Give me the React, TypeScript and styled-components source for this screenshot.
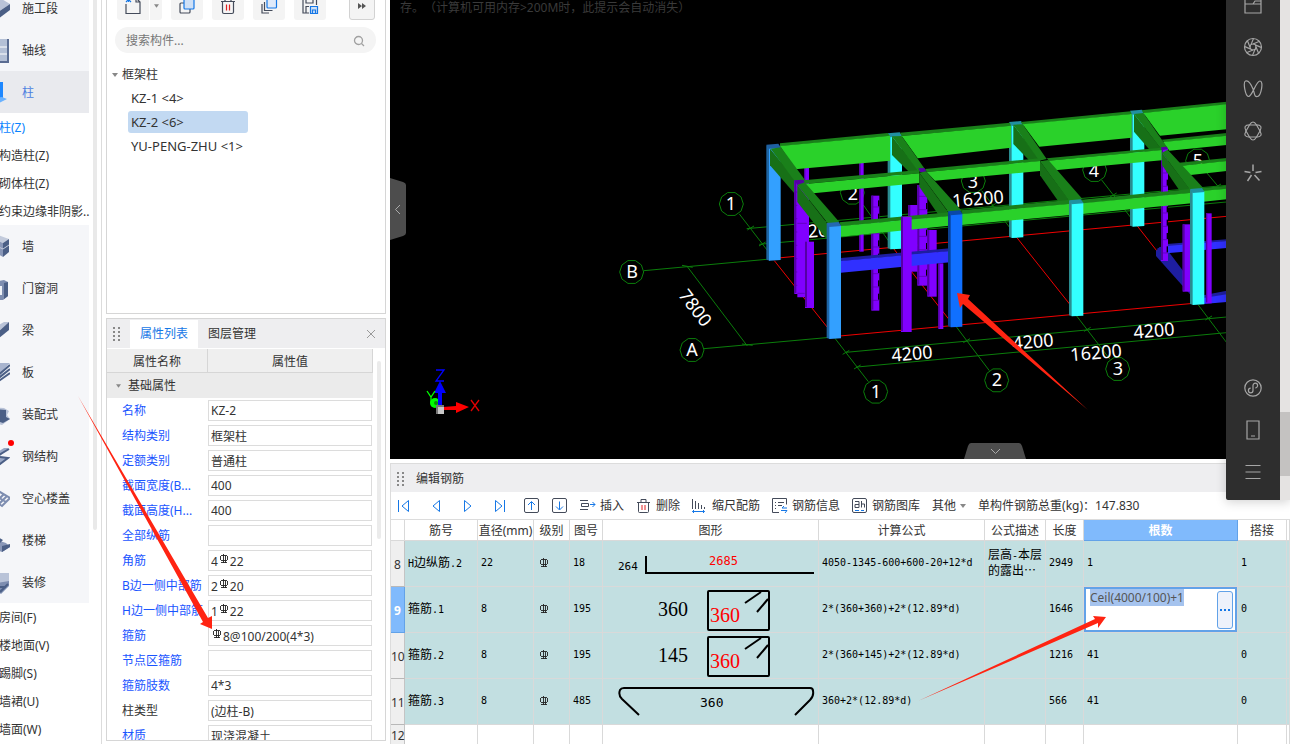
import React from 'react';
import styled, { createGlobalStyle } from 'styled-components';

const GlobalStyle = createGlobalStyle`
  * { box-sizing: border-box; }
  body {
    margin: 0;
    background: #fff;
    color: #333;
    font: 12px/16px "Noto Sans", "Noto Sans CJK SC", sans-serif;
    text-spacing-trim: space-all;
    overflow: hidden;
  }
  button, input { font: inherit; color: inherit; }
  button { background: none; border: 0; padding: 0; cursor: pointer; }
  ul { list-style: none; margin: 0; padding: 0; }
  svg { display: block; flex: none; }
`;

const Page = styled.div`
  position: relative;
  display: flex;
  height: 100vh;
  overflow: hidden;
`;

/* ---------- navigation ---------- */

const NavColumn = styled.nav`
  flex: none;
  display: flex;
  align-items: flex-start;
  width: 102px;
  margin-right: 4px;
  border-right: 1px solid #dcdcdc;
  overflow: hidden;
`;

const NavList = styled.ul`
  width: 109px;
  margin: -13px 4px 0 -20px;
`;

const NavItem = styled.button<{ $active?: boolean }>`
  position: relative;
  display: flex;
  align-items: center;
  gap: 12px;
  width: 100%;
  height: 42px;
  padding: 2px 0 0 6px;
  text-align: left;
  white-space: nowrap;
  background: ${(p) => (p.$active ? '#e9eaee' : '#f5f6f9')};
  color: ${(p) => (p.$active ? '#4c7fe0' : '#333')};
`;

const NavSub = styled.button<{ $active?: boolean }>`
  display: block;
  width: 100%;
  height: 28px;
  padding: 2px 0 0 19px;
  text-align: left;
  white-space: nowrap;
  color: ${(p) => (p.$active ? '#0a84ff' : '#333')};
`;

const Dot = styled.i`
  position: absolute;
  left: 28px;
  top: 5px;
  width: 6px;
  height: 6px;
  border-radius: 50%;
  background: #f00;
`;

const NavScroll = styled.div`
  width: 4px;
  height: 530px;
  border-radius: 0 0 2px 2px;
  background: #e9e9e9;
`;

const NavIcon = ({ kind }: { kind: string }) => {
  const d: Record<string, React.ReactNode> = {
    stage: (<><path d="M6 8l12-7 10 6-12 8z" fill="#b9c3d8" /><path d="M16 15l12-8v6l-12 9z" fill="#4b5f86" /><path d="M6 8l10 7v7L6 15z" fill="#7d8db0" /></>),
    axis: (<><path d="M4 0h22v24H4z" fill="#b4c0d6" /><path d="M25 0h2v24h-2zM4 22h22v2H4z" fill="#5a6c92" /><path d="M4 8h21M4 15h21" stroke="#fff" /></>),
    column: (<><path d="M14 1h7v17h-7z" fill="#1e88ff" /><path d="M8 17l12-1 5 2-10 5z" fill="#6ab2ff" /></>),
    wall: (<><path d="M10 3l6-3 11 4-6 4z" fill="#c3cbdc" /><path d="M10 3l11 5v14l-11-6z" fill="#8997b8" /><path d="M21 8l6-4v13l-6 5z" fill="#4b5f86" /><path d="M10 9l11 5 6-4" stroke="#c3cbdc" fill="none" /></>),
    door: (<><path d="M10 5l12-2 4 2v14l-5 4H10z" fill="#7d8db0" /><path d="M14 9h6v9h-6z" fill="#eef1f6" /><path d="M22 6l4-1v14l-4 3z" fill="#4b5f86" /></>),
    beam: (<><path d="M8 11L22 3h5L16 13z" fill="#b9c3d8" /><path d="M16 13L27 3v8L12 23z" fill="#4b5f86" /></>),
    slab: (<><path d="M8 13l8-11h12L17 13z" fill="#a9b5cf" /><path d="M14 16L28 4M14 19L28 8M14 22L28 12" stroke="#4b5f86" strokeWidth="2" /></>),
    prefab: (<><path d="M8 4l14 1 5 3-2 4 3 4-8 6-12-3z" fill="#b9c3d8" /><path d="M12 6l12 1v7l4 2-7 4-9-3z" fill="#4b5f86" /></>),
    steel: (<><path d="M8 12L22 3h5L17 12l9 1-12 10" fill="#9aa8c6" /><path d="M10 14L27 4M14 22l12-9-8-1" stroke="#4b5f86" strokeWidth="2" fill="none" /></>),
    hollow: (<path d="M10 12l8-7 10 6-8 8zM14 9l10 6M22 7l-8 8M25 9l-8 8" stroke="#7d8db0" strokeWidth="2" fill="none" />),
    stair: (<><path d="M8 6l8 2 2 4 6 2 4 4-8 5-12-5z" fill="#8997b8" /><path d="M16 8l5 3-3 3zM20 17l8-2v3l-8 5z" fill="#4b5f86" /></>),
    decor: (<><path d="M10 2h17v9l-7 4H10z" fill="#b9c3d8" /><path d="M10 13l17-3v5l-8 8-9-6z" fill="#7d8db0" /><path d="M12 16h12M18 21l8-8" stroke="#4b5f86" strokeWidth="2" /></>),
  };
  return <svg width="24" height="24" viewBox="4 0 24 24" aria-hidden="true">{d[kind]}</svg>;
};

/* ---------- component list panel ---------- */

const Sidebar = styled.aside`
  flex: none;
  display: flex;
  flex-direction: column;
  width: 280px;
  margin: 0 4px 3px 0;
  gap: 4px;
`;

const ListPanel = styled.section`
  flex: none;
  height: 314px;
  border: 1px solid #d6d6d6;
  border-top: 0;
  overflow: hidden;
`;

const IconBar = styled.div`
  display: flex;
  gap: 9px;
  height: 28px;
  margin: -8px 10px 7px;
`;

const IconButton = styled.button<{ $wide?: boolean; $framed?: boolean }>`
  display: flex;
  align-items: center;
  justify-content: center;
  width: ${(p) => (p.$wide ? 45 : p.$framed ? 26 : 32)}px;
  border-radius: 3px;
  background: #f4f4f4;
  ${(p) => p.$wide && 'gap: 0; justify-content: flex-start;'}
  ${(p) => p.$framed && 'margin-left: auto; border: 1px solid #d2d2d2;'}
`;

const SplitPart = styled.span<{ $main?: boolean }>`
  display: flex;
  align-items: center;
  justify-content: center;
  height: 100%;
  flex: ${(p) => (p.$main ? '0 0 33px' : '1')};
  border-right: ${(p) => (p.$main ? '1px solid #fff' : '0')};
`;

const SearchBox = styled.label`
  display: flex;
  align-items: center;
  height: 26px;
  margin: 0 9px 9px 8px;
  padding: 1px 11px 0;
  border-radius: 13px;
  background: #f4f4f4;
`;

const SearchInput = styled.input`
  flex: 1;
  min-width: 0;
  padding: 0;
  border: 0;
  outline: 0;
  background: none;
  &::placeholder { color: #777; opacity: 1; }
`;

const TreeHead = styled.button`
  display: flex;
  align-items: center;
  gap: 4px;
  height: 24px;
  padding: 2px 0 0 5px;
`;

const TreeItem = styled.button<{ $selected?: boolean }>`
  display: block;
  width: 120px;
  height: 22px;
  margin: 1px 0 2px 21px;
  padding-left: 3px;
  border-radius: 3px;
  font-size: 13px;
  line-height: 22px;
  text-align: left;
  white-space: pre;
  background: ${(p) => (p.$selected ? '#c2d9f2' : 'transparent')};
`;

const Caret = ({ size = 5 }: { size?: number }) => (
  <svg width={size} height="4" viewBox="0 0 6 4" aria-hidden="true"><path d="M0 0h6L3 4z" fill="#888" /></svg>
);

/* ---------- properties ---------- */

const PropPanel = styled.section`
  flex: 1;
  min-height: 0;
  border: 1px solid #d6d6d6;
  overflow: hidden;
`;

const TabBar = styled.div`
  display: flex;
  align-items: center;
  height: 30px;
  padding: 0 9px 0 6px;
  background: #eeeef0;
  border-bottom: 1px solid #fff;
`;

const Tab = styled.button<{ $active?: boolean }>`
  height: 28px;
  padding: 0 10px;
  background: ${(p) => (p.$active ? '#fff' : 'transparent')};
  color: ${(p) => (p.$active ? '#1577e6' : '#333')};
  &:first-of-type { margin-left: 9px; }
`;

const TabClose = styled.button`margin-left: auto;`;

const PropBody = styled.div`
  display: flex;
  align-items: flex-start;
`;

const PropTable = styled.table`
  flex: 1;
  border-collapse: separate;
  border-spacing: 0;
  table-layout: fixed;
`;

const PropHead = styled.th`
  height: 24px;
  padding: 2px 0 0;
  border-right: 1px solid #d6d6d6;
  border-bottom: 1px solid #d6d6d6;
  background: #efefef;
  font-weight: normal;
  &:first-child { width: 101px; }
`;

const GroupCell = styled.td`
  height: 25px;
  padding: 1px 0 0 9px;
  background: #ebebeb;
`;

const GroupButton = styled.button`
  display: flex;
  align-items: center;
  gap: 7px;
`;

const PropName = styled.td<{ $plain?: boolean }>`
  height: 25px;
  padding: 0 0 0 15px;
  color: ${(p) => (p.$plain ? '#333' : '#1a55ff')};
  white-space: nowrap;
  overflow: hidden;
`;

const PropValue = styled.td`
  position: relative;
  height: 25px;
  padding: 0 1px 0 0;
`;

const Field = styled.input`
  display: block;
  width: 100%;
  height: 21px;
  padding: 0 2px;
  border: 1px solid #dcdcdc;
  background: #fff;
`;

const FieldSign = styled.span<{ $after: number }>`
  position: absolute;
  left: ${(p) => 4 + p.$after * 7}px;
  top: 6px;
`;

const PropScroll = styled.div`
  width: 4px;
  height: 178px;
  margin: 12px 4px 0 4px;
  border-radius: 2px;
  background: #ebebeb;
`;

const Grip = () => (
  <svg width="8" height="14" viewBox="0 0 8 14" fill="#888" aria-hidden="true">
    {[0, 4, 8, 12].map((y) => (<React.Fragment key={y}><path d={`M0 ${y}h2v2H0z`} /><path d={`M5 ${y}h2v2H5z`} /></React.Fragment>))}
  </svg>
);

const RebarSign = () => (
  <svg width="10" height="10" viewBox="0 0 10 10" fill="none" stroke="#222" role="img" aria-label="HRB400">
    <path d="M1.500 2v4M8.500 2v4M2 1.500h6M2 6.500h6" strokeWidth=".9" />
    <path d="M4.500 0v9M6.500 2v7M2 8.500h6" strokeWidth=".9" />
  </svg>
);

type Prop = { name: string; value: string; sign?: number; plain?: boolean };
const props: Prop[] = [
  { name: '名称', value: 'KZ-2' },
  { name: '结构类别', value: '框架柱' },
  { name: '定额类别', value: '普通柱' },
  { name: '截面宽度(B...', value: '400' },
  { name: '截面高度(H...', value: '400' },
  { name: '全部纵筋', value: '' },
  { name: '角筋', value: '4\u300022', sign: 1 },
  { name: 'B边一侧中部筋', value: '2\u300020', sign: 1 },
  { name: 'H边一侧中部筋', value: '1\u300022', sign: 1 },
  { name: '箍筋', value: '\u30008@100/200(4*3)', sign: 0 },
  { name: '节点区箍筋', value: '' },
  { name: '箍筋肢数', value: '4*3' },
  { name: '柱类型', value: '(边柱-B)', plain: true },
  { name: '材质', value: '现浇混凝土' },
];

/* ---------- main area ---------- */

const Main = styled.main`
  flex: 1;
  min-width: 0;
  display: flex;
  flex-direction: column;
`;

const Viewport = styled.section`
  position: relative;
  flex: 1;
  min-height: 0;
  margin-bottom: 4px;
  background: #000;
  overflow: hidden;
`;

const MemoryNote = styled.p`
  position: absolute;
  left: 10px;
  top: 0;
  margin: 0;
  color: #3a3a3a;
  white-space: nowrap;
`;

const SideHandle = styled.button`
  position: absolute;
  left: 0;
  top: 178px;
`;

const BottomHandle = styled.button`
  position: absolute;
  left: 574px;
  bottom: 0;
`;

const C = { g: '#2ad12a', gt: '#1a801a', gs: '#177017', cy: '#33ffff', cyd: '#2a8c90', bl: '#33a0ff', bld: '#1f66a5', p: '#8000ff', pd: '#5500a5', b: '#3030ff', bd: '#1e1ea0' };

const beams: [string, string][] = [
  [C.gt, '540,160 863,129 870,138 540,169'], [C.g, '540,168 870,137 870,212 585,238'],
  [C.gt, '900,128 1230,98 1233,108 905,138'], [C.g, '905,138 1233,107 1233,173 953,205'],
  [C.gt, '1262,96 1592,64 1595,73 1268,104'], [C.g, '1268,103 1595,72 1595,143 1318,170'],
  [C.gt, '1625,61 1880,35 1880,44 1630,70'], [C.g, '1630,69 1880,43 1880,118 1680,137'],
];
const crossBack: [string, string][] = [
  [C.gs, '510,176 592,276 583,310 510,226'], [C.gt, '512,176 543,172 615,270 588,278'],
  [C.gs, '876,139 958,245 925,244 876,195'], [C.gt, '876,139 905,138 975,238 956,246'],
  [C.gs, '1240,104 1322,212 1290,214 1240,162'], [C.gt, '1240,104 1268,103 1340,207 1318,212'],
  [C.gs, '1602,72 1685,178 1650,181 1602,125'], [C.gt, '1602,72 1630,69 1700,170 1684,178'],
];
const midBeams: [string, string][] = [
  [C.gt, '610,271 958,240 958,250 612,282'], [C.g, '615,282 958,250 958,279 640,310'],
  [C.gt, '975,237 1320,205 1320,214 980,246'], [C.g, '980,246 1320,213 1320,243 1005,272'],
  [C.gt, '1340,205 1683,173 1685,181 1347,212'], [C.g, '1345,212 1685,180 1685,211 1365,241'],
  [C.gt, '1685,149 1880,129 1880,138 1692,157'], [C.g, '1690,156 1880,137 1880,165 1708,182'],
  [C.gt, '1730,219 1880,204 1880,214 1740,228'], [C.g, '1738,228 1880,213 1880,243 1765,256'],
];
const crossFront: [string, string][] = [
  [C.gs, '592,285 688,408 680,448 592,336'], [C.gt, '592,285 614,277 718,396 688,406'],
  [C.gs, '958,248 1048,371 1015,374 958,290'], [C.gt, '958,248 978,244 1085,362 1048,370'],
  [C.gs, '1320,214 1410,334 1378,338 1320,256'], [C.gt, '1320,214 1345,210 1448,328 1410,336'],
  [C.gs, '1686,188 1772,301 1740,304 1686,225'], [C.gt, '1686,188 1703,179 1810,294 1772,302'],
];
const frontBeams: [string, string][] = [
  [C.gt, '718,397 1048,367 1048,379 723,409'], [C.g, '723,408 1048,378 1048,407 723,440'],
  [C.gt, '1083,361 1412,329 1412,342 1085,373'], [C.g, '1085,372 1412,341 1412,375 1085,405'],
  [C.gt, '1445,329 1772,297 1775,309 1448,341'], [C.g, '1448,340 1775,308 1775,340 1448,372'],
  [C.gt, '1805,294 1880,287 1880,297 1810,303'], [C.g, '1810,302 1880,296 1880,328 1810,335'],
];

const Faces = ({ list }: { list: [string, string][] }) => (<>{list.map(([f, pts]) => <polygon key={pts} fill={f} points={pts} />)}</>);

const Column = ({ x, y, main = C.cy, side = C.cyd, cap = '#2090a0' }: { x: number; y: number; main?: string; side?: string; cap?: string }) => (
  <g>
    <path d={`M${x} ${y + 4}h10v346l-10 -3z`} fill={side} />
    <path d={`M${x + 8} ${y + 10}h35v338l-35 2z`} fill={main} />
    <path d={`M${x} ${y + 2}l36 -3l8 12l-36 3z`} fill={cap} />
  </g>
);

const Post = ({ x, y, w, h, block }: { x: number; y: number; w: number; h: number; block?: boolean }) => (
  <g>
    <rect x={x} y={y} width={w} height={h} fill={C.p} />
    <rect x={x} y={y} width={w > 20 ? 6 : 4} height={h - 3} fill={C.pd} />
    {block && Array.from({ length: Math.floor(h / 40) }, (_, i) => (
      <g key={i}>
        <path d={`M${x} ${y + 40 * i + 34}h${w}`} stroke={C.pd} strokeWidth="2" />
        <rect x={x + w - 4} y={y + 40 * i + 14} width="4" height="18" fill="#000" />
      </g>
    ))}
  </g>
);

const bubbles = [[95, 546], [276, 780], [394, 342], [757, 308], [1120, 273], [1484, 240], [1793, 212], [827, 905], [1190, 871], [1553, 837]];
const ring = (cx: number, cy: number) =>
  Array.from({ length: 10 }, (_, i) => `${cx + 36 * Math.cos((i * Math.PI) / 5)},${cy + 36 * Math.sin((i * Math.PI) / 5)}`).join(' ');
const ticks = [[452, 414], [487, 462], [738, 787], [772, 831], [1100, 752], [1462, 718], [1826, 684], [1180, 345], [1540, 315], [1853, 288]];

const Label = ({ x, y, r = 0, children }: { x: number; y: number; r?: number; children: string }) => (
  <text x={x} y={y} dy="6" textAnchor="middle" transform={r ? `rotate(${r} ${x} ${y})` : undefined}>{children}</text>
);

const Scene = () => (
  <svg width="100%" height="100%" viewBox="390 0 900 459" preserveAspectRatio="xMinYMid slice" role="img" aria-label="框架柱三维视图">
    <g transform="translate(600 90) scale(.33333)">
      <g stroke="#0b7d0b" strokeWidth="3" fill="none">
        {bubbles.map(([x, y]) => <polygon key={`${x}-${y}`} points={ring(x, y)} />)}
        <path d="M132 542L500 508M312 776L690 742M262 530L442 768M246 526L278 532M426 762L458 766M418 372L505 485M440 416L1880 286M478 463L1880 336M790 345L885 480M1145 302L1250 440M1505 270L1612 408M1815 242L1855 290M738 787L1880 681M772 831L1880 728M705 745L805 875M1065 705L1168 842M1430 678L1530 808M1795 645L1880 758" />
        {ticks.map(([x, y]) => <path key={x} d={`M${x - 10} ${y + 6}L${x + 10} ${y - 6}`} />)}
      </g>
      <path d="M523 505L1880 379M720 738L1770 641M523 512L690 722M880 475L1060 705M1250 442L1415 650M1612 408L1790 635" stroke="#f00000" strokeWidth="3" fill="none" />
    </g>
    <g fill="#fff" fontFamily="'Noto Sans', sans-serif" fontSize="18">
      <Label x={632} y={272}>B</Label>
      <Label x={692} y={350}>A</Label>
      <Label x={731} y={204}>1</Label>
      <Label x={853} y={194}>2</Label>
      <Label x={973} y={182}>3</Label>
      <Label x={1094} y={171}>4</Label>
      <Label x={1198} y={161}>5</Label>
      <Label x={876} y={392}>1</Label>
      <Label x={997} y={380}>2</Label>
      <Label x={1118} y={369}>3</Label>
      <Label x={695} y={308} r={53}>7800</Label>
      <Label x={818} y={231} r={-5}>20</Label>
      <Label x={978} y={199} r={-5}>16200</Label>
      <Label x={912} y={354} r={-5}>4200</Label>
      <Label x={1033} y={342} r={-5}>4200</Label>
      <Label x={1096} y={353} r={-5}>16200</Label>
      <Label x={1154} y={331} r={-5}>4200</Label>
    </g>
    <g transform="translate(600 90) scale(.33333)">
      <Post x={778} y={215} w={13} h={270} />
      <Post x={612} y={230} w={15} h={240} />
      <Column x={499} y={162} main={C.bl} side={C.bld} cap="#1f5fa0" />
      <Column x={863} y={128} />
      <Column x={1227} y={94} />
      <Column x={1590} y={60} />
      <Faces list={beams} />
      <Faces list={crossBack} />
      <Faces list={[[C.bd, '1668,482 1680,470 1708,488 1770,570 1775,618 1668,498'], [C.bd, '1668,478 1700,462 1880,448 1880,454 1700,472'], [C.b, '1700,468 1880,453 1880,474 1700,490'], [C.bd, '1810,616 1880,602 1880,614 1810,626'], [C.b, '1810,624 1880,613 1880,636 1810,642']]} />
      <Post x={583} y={272} w={35} h={340} block />
      <path d="M592 300h30v322h-30z" fill={C.p} />
      <path d="M592 400h28M592 610h22" stroke={C.pd} strokeWidth="2" />
      <Post x={615} y={455} w={27} h={199} />
      <Post x={814} y={317} w={24} h={345} block />
      <Post x={952} y={285} w={30} h={302} block />
      <Post x={1683} y={175} w={21} h={338} block />
      <Faces list={midBeams} />
      <Faces list={[[C.pd, '583,271 610,269 616,281 592,285'], [C.pd, '955,235 973,234 980,245 961,247'], [C.pd, '1683,172 1700,170 1704,178 1687,180']]} />
      <Faces list={crossFront} />
      <Post x={925} y={345} w={27} h={200} />
      <Post x={982} y={420} w={28} h={200} />
      <Post x={1748} y={403} w={24} h={202} />
      <Faces list={[[C.bd, '723,504 1050,475 1050,484 723,514'], [C.b, '723,513 1050,483 1050,517 723,548']]} />
      <Post x={1015} y={520} w={15} h={197} />
      <Faces list={frontBeams} />
      <Post x={903} y={380} w={32} h={346} />
      <Post x={1818} y={370} w={17} h={270} />
      <Column x={680} y={397} main={C.bl} side={C.bld} cap="#2468b0" />
      <Column x={1044} y={362} main="#1070ff" side="#0a3f90" cap="#0a48a8" />
      <Column x={1407} y={329} />
      <Column x={1770} y={295} />
    </g>
    <g>
      <circle cx="435" cy="403" r="5" fill="#0f0" />
      <circle cx="436" cy="403" r="2" fill="#0a900a" />
      <path d="M438 406v-13h-4l6-12 6 12h-4v13z" fill="#00f" />
      <path d="M443 407l13-1v-4l13 5-13 6v-3h-13z" fill="#f00" />
      <path d="M436 405h8v9h-8z" fill="#c8c8c8" />
      <path d="M436 405h8v2h-6v7h-2z" fill="#777" />
      <path d="M436 370h8l-8 11h8" stroke="#00f" strokeWidth="1.3" fill="none" />
      <path d="M471 400l8 11M479 400l-8 11" stroke="#e00000" strokeWidth="1.3" fill="none" />
      <path d="M427 391l4 6 4-6M431 397v6" stroke="#0f0" strokeWidth="1.3" fill="none" />
    </g>
  </svg>
);

/* ---------- rebar editor ---------- */

const Editor = styled.section`
  flex: none;
  height: 281px;
  border-top: 1px solid #dcdcdc;
  border-left: 1px solid #dcdcdc;
  overflow: hidden;
`;

const EditorTitle = styled.h2`
  display: flex;
  align-items: center;
  gap: 11px;
  height: 28px;
  margin: 0;
  padding: 2px 0 0 6px;
  background: #eeeef0;
  font-size: 12px;
  font-weight: normal;
`;

const EditorBar = styled.div`
  display: flex;
  align-items: center;
  gap: 12px;
  height: 28px;
  padding: 1px 0 0 5px;
  border-bottom: 1px solid #dcdcdc;
  white-space: nowrap;
`;

const Pager = styled.div`
  display: flex;
  gap: 16px;
  margin-right: 4px;
`;

const Tool = styled.button`
  display: flex;
  align-items: center;
  gap: 4px;
`;

const Grid = styled.table`
  width: 100%;
  border-collapse: separate;
  border-spacing: 0;
  table-layout: fixed;
`;

const HeadCell = styled.th<{ $active?: boolean }>`
  height: 21px;
  padding: 2px 0 0;
  border-right: 1px solid #d9d9d9;
  border-bottom: 1px solid #d9d9d9;
  white-space: nowrap;
  overflow: hidden;
  font-weight: ${(p) => (p.$active ? 'bold' : 'normal')};
  ${(p) => p.$active && 'background: #80bafc; color: #fff; border-color: #62a2e8;'}
`;

const RowHead = styled.th<{ $active?: boolean; $top?: boolean }>`
  height: 46px;
  padding: 3px 0 0;
  border-right: 1px solid #c4c4c4;
  border-bottom: 1px solid #b8b8b8;
  background: #efefef;
  font-weight: ${(p) => (p.$active ? 'bold' : 'normal')};
  vertical-align: ${(p) => (p.$top ? 'top' : 'middle')};
  ${(p) => p.$active && 'background: #80bafc; color: #fff; border-color: #62a2e8;'}
`;

const Cell = styled.td<{ $empty?: boolean; $bare?: boolean }>`
  height: 46px;
  padding: ${(p) => (p.$bare ? '0' : '0 0 1px 3px')};
  border-right: 1px solid #d9d9d9;
  border-bottom: 1px solid #d9d9d9;
  background: ${(p) => (p.$empty ? '#fff' : '#c2dfe1')};
  color: #000;
  font: 10px/14px "DejaVu Sans Mono", "Noto Sans CJK SC", monospace;
  white-space: nowrap;
  overflow: hidden;
`;

const GradeMark = styled.div`padding-left: 2px;`;

const Han = styled.span`
  font-family: "Noto Sans CJK SC", sans-serif;
  font-size: 12px;
  line-height: 14px;
`;

const EditBox = styled.div`
  display: flex;
  align-items: flex-start;
  justify-content: space-between;
  height: 45px;
  padding: 0 2px 0 4px;
  border: 2px solid #62a2e8;
  background: #fff;
`;

const EditInput = styled.input`
  field-sizing: content;
  height: 17px;
  padding: 0;
  border: 0;
  outline: 0;
  background: #a5c3ee;
  color: #555;
  font: 12px/16px "Noto Sans", sans-serif;
`;

const MoreButton = styled.button`
  width: 16px;
  height: 38px;
  margin-top: 2px;
  padding-left: 2px;
  border: 1px solid #62a2e8;
  border-radius: 3px;
  background: #eef2fb;
`;

const cjk = (text: string) =>
  text.split(/([\u2026\u4e00-\u9fff]+)/).map((part, i) => (i % 2 ? <Han key={i}>{part}</Han> : part));

const Drawing = ({ row }: { row: number }) => {
  const box = { fill: 'none', stroke: '#000', strokeWidth: 2 };
  return (
    <svg width="215" height="45" viewBox="603 0 215 45" role="img" aria-label="钢筋图形">
      {row === 8 && (<>
        <path d="M646 15v17h168" {...box} />
        <g fontFamily="'DejaVu Sans Mono', monospace"><text x="618" y="29" fontSize="11">264</text>
          <text x="709" y="24" fontSize="12" fill="#f00">2685</text></g>
      </>)}
      {(row === 9 || row === 10) && (<>
        <rect x="708" y="4" width="61" height="39" rx="1" {...box} />
        <path d="M761 5l-16 11M768 12l-11 13" {...box} />
        <g fontFamily="'Liberation Serif', serif" fontSize="20"><text x="658" y="29">{row === 9 ? '360' : '145'}</text>
          <text x="710" y="35" fill="#f00">360</text></g>
      </>)}
      {row === 11 && (<>
        <path d="M639 36l-17-16q-4-4-2-9 1-2 4-2h186q3 0 3 3 1 5-3 9l-15 15" {...box} />
        <text x="700" y="28" fontSize="13" fontFamily="'DejaVu Sans Mono', monospace">360</text>
      </>)}
    </svg>
  );
};

const columns: [string, number?][] = [['', 14], ['筋号', 73], ['直径(mm)', 56], ['级别', 36], ['图号', 33], ['图形', 216], ['计算公式', 166], ['公式描述', 61], ['长度', 38], ['根数', 154], ['搭接', 49], ['']];

const rows = [
  { no: 8, name: 'H边纵筋.2', dia: '22', fig: '18', formula: '4050-1345-600+600-20+12*d', note: true, len: '2949', count: '1', lap: '1' },
  { no: 9, name: '箍筋.1', dia: '8', fig: '195', formula: '2*(360+360)+2*(12.89*d)', len: '1646', count: 'Ceil(4000/100)+1', lap: '0' },
  { no: 10, name: '箍筋.2', dia: '8', fig: '195', formula: '2*(360+145)+2*(12.89*d)', len: '1216', count: '41', lap: '0' },
  { no: 11, name: '箍筋.3', dia: '8', fig: '485', formula: '360+2*(12.89*d)', len: '566', count: '41', lap: '0' },
];

const BarIcon = ({ children }: { children: React.ReactNode }) => (
  <svg width="16" height="16" viewBox="0 0 16 16" fill="none" stroke="#444b5a" aria-hidden="true">{children}</svg>
);
const BLUE = '#1577e6';

/* ---------- floating dock ---------- */

const Dock = styled.aside`
  position: absolute;
  top: 0;
  right: 0;
  display: flex;
  height: 500px;
  box-shadow: 0 2px 10px rgba(0, 0, 0, .18);
`;

const DockBar = styled.div`
  display: flex;
  flex-direction: column;
  align-items: center;
  width: 54px;
  padding-bottom: 7px;
  background: #2e2e2e;
  border-radius: 0 0 0 2px;
`;

const DockButton = styled.button<{ $push?: boolean }>`
  flex: none;
  display: flex;
  align-items: center;
  justify-content: center;
  width: 32px;
  height: 42px;
  ${(p) => p.$push && 'margin-top: auto;'}
  &:first-child { margin-top: -16px; }
`;

const DockTrack = styled.div`
  width: 10px;
  padding-top: 412px;
  background: #e5e3e2;
`;

const DockThumb = styled.div`
  height: 64px;
  background: #c4c2c1;
`;

const DockIcon = ({ children }: { children: React.ReactNode }) => (
  <svg width="20" height="20" viewBox="0 0 20 20" fill="none" stroke="#a6a6a6" strokeWidth="1.2" aria-hidden="true">{children}</svg>
);
const around = (n: number, d: string) => Array.from({ length: n }, (_, i) => <path key={i} d={d} transform={`rotate(${(i * 360) / n} 10 10)`} />);

const Pointers = styled.svg`
  position: absolute;
  left: 0;
  top: 0;
  pointer-events: none;
`;

const navTop = [['stage', '施工段'], ['axis', '轴线'], ['column', '柱']];
const navRest = [['wall', '墙'], ['door', '门窗洞'], ['beam', '梁'], ['slab', '板'], ['prefab', '装配式'], ['steel', '钢结构'], ['hollow', '空心楼盖'], ['stair', '楼梯'], ['decor', '装修']];

export default function App() {
  return (
    <Page>
      <GlobalStyle />
      <NavColumn>
        <NavList>
          {navTop.map(([k, t]) => <li key={k}><NavItem $active={k === 'column'}><NavIcon kind={k} />{t}</NavItem></li>)}
          {['柱(Z)', '构造柱(Z)', '砌体柱(Z)', '约束边缘非阴影..'].map((t, i) => <li key={t}><NavSub $active={i === 0}>{t}</NavSub></li>)}
          {navRest.map(([k, t]) => <li key={k}><NavItem><NavIcon kind={k} />{t}{k === 'steel' && <Dot />}</NavItem></li>)}
          {['房间(F)', '楼地面(V)', '踢脚(S)', '墙裙(U)', '墙面(W)'].map((t) => <li key={t}><NavSub>{t}</NavSub></li>)}
        </NavList>
        <NavScroll />
      </NavColumn>

      <Sidebar>
        <ListPanel>
          <IconBar>
            <IconButton $wide aria-label="新建">
              <SplitPart $main>
                <svg width="18" height="18" viewBox="0 0 18 18" fill="none" stroke="#444b5a" strokeWidth="1.2"><path d="M2 7v9.500h14V5l-4-4h-3M12 1v4h4" /><path d="M2 0l5 5M7 0L2 5M4.500 0v5M2 2.500h5" stroke={BLUE} /></svg>
              </SplitPart>
              <SplitPart><Caret /></SplitPart>
            </IconButton>
            <IconButton aria-label="复制">
              <svg width="18" height="18" viewBox="0 0 18 18" stroke="#444b5a" strokeWidth="1.2"><rect x="2" y="6" width="10" height="10" rx="1" fill="none" /><rect x="6" y="1" width="10" height="11" rx="1" fill="#cfe0f6" stroke={BLUE} /></svg>
            </IconButton>
            <IconButton aria-label="删除">
              <svg width="18" height="18" viewBox="0 0 18 18" fill="none" stroke="#444b5a" strokeWidth="1.2"><path d="M2 4.500h14M6 4V1h6v3M3.500 5v10q0 1.500 1.500 1.500h8q1.500 0 1.500-1.500V5" /><path d="M7.500 7.500v6M10.500 7.500v6" stroke="#e02020" /></svg>
            </IconButton>
            <IconButton aria-label="层间复制">
              <svg width="18" height="18" viewBox="0 0 18 18" fill="none" stroke="#444b5a" strokeWidth="1.2"><path d="M2 7v9h7M4.500 5v8.500h8" /><rect x="7" y="1" width="9.500" height="10" rx="1" fill="#dfeafa" stroke={BLUE} /></svg>
            </IconButton>
            <IconButton aria-label="存档">
              <svg width="18" height="18" viewBox="0 0 18 18" fill="none" stroke="#444b5a" strokeWidth="1.2"><path d="M8 16H2V1h13.500v7M5 1v5h7V1M5 16V9.500h3" /><path d="M9.500 9.500h7v7h-7zM11.500 16v-3h3v3" stroke={BLUE} fill="#cfe0f6" /></svg>
            </IconButton>
            <IconButton $framed aria-label="更多">
              <svg width="8" height="6" viewBox="0 0 8 6" fill="#555"><path d="M0 0l4 3-4 3zM4 0l4 3-4 3z" /></svg>
            </IconButton>
          </IconBar>
          <SearchBox>
            <SearchInput placeholder="搜索构件..." aria-label="搜索构件" />
            <svg width="12" height="12" viewBox="0 0 12 12" fill="none" stroke="#a0a0a0" strokeWidth="1.3"><circle cx="5.500" cy="5.500" r="4" /><path d="M8.500 8.500l2.500 2.500" /></svg>
          </SearchBox>
          <TreeHead><Caret size={6} />框架柱</TreeHead>
          <TreeItem>KZ-1 {'<4>'}</TreeItem>
          <TreeItem $selected>KZ-2 {'<6>'}</TreeItem>
          <TreeItem>YU-PENG-ZHU {'<1>'}</TreeItem>
        </ListPanel>

        <PropPanel>
          <TabBar>
            <Grip />
            <Tab $active>属性列表</Tab>
            <Tab>图层管理</Tab>
            <TabClose aria-label="关闭"><svg width="10" height="10" viewBox="0 0 10 10" stroke="#999"><path d="M1 1l8 8M9 1L1 9" /></svg></TabClose>
          </TabBar>
          <PropBody>
            <PropTable>
              <thead><tr><PropHead>属性名称</PropHead><PropHead>属性值</PropHead></tr></thead>
              <tbody>
                <tr><GroupCell colSpan={2}><GroupButton><Caret />基础属性</GroupButton></GroupCell></tr>
                {props.map((p, i) => (
                  <tr key={p.name}>
                    <PropName $plain={p.plain}><label htmlFor={`prop-${i}`}>{p.name}</label></PropName>
                    <PropValue>
                      <Field id={`prop-${i}`} defaultValue={p.value} />
                      {p.sign !== undefined && <FieldSign $after={p.sign}><RebarSign /></FieldSign>}
                    </PropValue>
                  </tr>
                ))}
              </tbody>
            </PropTable>
            <PropScroll />
          </PropBody>
        </PropPanel>
      </Sidebar>

      <Main>
        <Viewport>
          <Scene />
          <MemoryNote>存。（计算机可用内存&gt;200M时，此提示会自动消失）</MemoryNote>
          <SideHandle aria-label="收起侧栏">
            <svg width="16" height="62" viewBox="0 0 16 62"><path d="M0 0l13 4q3 1 3 3v48q0 2-3 3L0 62z" fill="#4d4d4d" /><path d="M10 27l-4.500 4.500L10 36" fill="none" stroke="#aaa" /></svg>
          </SideHandle>
          <BottomHandle aria-label="收起面板">
            <svg width="62" height="16" viewBox="0 0 62 16"><path d="M0 16L4 3q1-3 3-3h48q2 0 3 3l4 13z" fill="#4d4d4d" /><path d="M27 6l4.500 4.500L36 6" fill="none" stroke="#aaa" /></svg>
          </BottomHandle>
        </Viewport>

        <Editor>
          <EditorTitle><Grip />编辑钢筋</EditorTitle>
          <EditorBar>
            <Pager>
              <Tool aria-label="首条"><BarIcon><path d="M2.500 2v12M12.500 2.500v11L6 8z" stroke={BLUE} /></BarIcon></Tool>
              <Tool aria-label="上一条"><BarIcon><path d="M11.500 2.500v11L5 8z" stroke={BLUE} /></BarIcon></Tool>
              <Tool aria-label="下一条"><BarIcon><path d="M4.500 2.500v11L11 8z" stroke={BLUE} /></BarIcon></Tool>
              <Tool aria-label="末条"><BarIcon><path d="M12.500 2v12M3.500 2.500v11L10 8z" stroke={BLUE} /></BarIcon></Tool>
            </Pager>
            <Tool aria-label="上移"><BarIcon><rect x=".5" y=".5" width="14" height="14" rx="1.500" /><path d="M7.500 12V4M4 7l3.500-3.500L11 7" stroke={BLUE} /></BarIcon></Tool>
            <Tool aria-label="下移"><BarIcon><rect x=".5" y=".5" width="14" height="14" rx="1.500" /><path d="M7.500 3.500v8M4 8.500L7.500 12 11 8.500" stroke={BLUE} /></BarIcon></Tool>
            <Tool><BarIcon><path d="M0 2.500h8M0 11.500h8M1.500 5.500h7v3h-7z" /><path d="M10 6.500h5M12.500 4l2.500 2.500-2.500 2.500" stroke={BLUE} /></BarIcon>插入</Tool>
            <Tool><BarIcon><path d="M1 4.500h13M5 4V1.500h5V4M2.500 5v8.500q0 1 1 1h8q1 0 1-1V5" /><path d="M6 7v5M9 7v5" stroke="#e02020" /></BarIcon>删除</Tool>
            <Tool><BarIcon><path d="M.5 1v10M3.500 3v8M6.500 5v6M9.500 7v4M12.500 9v2" /><path d="M.5 13.500h12M2 12l-1.500 1.500L2 15M11 12l1.500 1.500L11 15" stroke={BLUE} /></BarIcon>缩尺配筋</Tool>
            <Tool><BarIcon><path d="M7 14.500H.500v-14h14v6M3 4.500h1M6 4.500h6M3 7.500h1M6 7.500h4M3 10.500h1" /><path d="M15 10h-5l2-2M9 12.500h6l-2 2.500" stroke={BLUE} /></BarIcon>钢筋信息</Tool>
            <Tool><BarIcon><rect x=".5" y=".5" width="14" height="14" rx="1.500" /><path d="M3 3.500h4v6H3v-3h4M9.500 3v6.500M9.500 6h3v3.500" /><path d="M3 12.500h4M9 12.500h3" stroke={BLUE} /></BarIcon>钢筋图库</Tool>
            <Tool><span>其他</span><Caret size={6} /></Tool>
            <span>单构件钢筋总重(kg)：147.830</span>
          </EditorBar>
          <Grid>
            <colgroup>{columns.map(([, w], i) => <col key={i} width={w} />)}</colgroup>
            <thead><tr>{columns.map(([t], i) => <HeadCell key={i} $active={t === '根数'}>{t}</HeadCell>)}</tr></thead>
            <tbody>
              {rows.map((r) => (
                <tr key={r.no}>
                  <RowHead $active={r.no === 9}>{r.no}</RowHead>
                  <Cell>{cjk(r.name)}</Cell>
                  <Cell>{r.dia}</Cell>
                  <Cell><GradeMark><RebarSign /></GradeMark></Cell>
                  <Cell>{r.fig}</Cell>
                  <Cell $bare><Drawing row={r.no} /></Cell>
                  <Cell>{r.formula}</Cell>
                  <Cell>{r.note && <>{cjk('层高-本层')}<br />{cjk('的露出…')}</>}</Cell>
                  <Cell>{r.len}</Cell>
                  {r.no === 9 ? (
                    <Cell $bare>
                      <EditBox>
                        <EditInput defaultValue={r.count} aria-label="根数" />
                        <MoreButton aria-label="更多"><svg width="10" height="2" viewBox="0 0 10 2" fill={BLUE}><path d="M0 0h2v2H0zM4 0h2v2H4zM8 0h2v2H8z" /></svg></MoreButton>
                      </EditBox>
                    </Cell>
                  ) : <Cell>{r.count}</Cell>}
                  <Cell>{r.lap}</Cell>
                  <Cell />
                </tr>
              ))}
              <tr><RowHead $top>12</RowHead>{columns.slice(1).map((_, i) => <Cell key={i} $empty />)}</tr>
            </tbody>
          </Grid>
        </Editor>
      </Main>

      <Dock>
        <DockBar>
          <DockButton aria-label="窗口"><DockIcon><path d="M2 2h16v16H2zM2 9h16M10 9l2-3h6" /></DockIcon></DockButton>
          <DockButton aria-label="光圈"><DockIcon><circle cx="10" cy="10" r="8.500" /><circle cx="10" cy="10" r="3" />{around(8, 'M10 7L16 4.500')}</DockIcon></DockButton>
          <DockButton aria-label="蝴蝶"><DockIcon><path d="M10 10C8 5 5 1 2.500 2S2 17 5.500 17.500 13 2 17 2s1 15-2.500 15.500S12 15 10 10z" /></DockIcon></DockButton>
          <DockButton aria-label="六边形"><DockIcon><path d="M6.500 4h7l3.500 6-3.500 6h-7L3 10z" />{around(6, 'M6.500 4Q10 -2 13.500 4')}</DockIcon></DockButton>
          <DockButton aria-label="星芒"><DockIcon><path d="M10 8V1.500M7.500 9.500l-6-1M12.500 9.500l6-1M8.500 12l-4 6M11.500 12l5 5.500" strokeWidth="1.500" /></DockIcon></DockButton>
          <DockButton $push aria-label="小程序"><DockIcon><circle cx="10" cy="10" r="8.200" /><path d="M10 7.500v5a2.300 2.300 0 1 1-2.300-2.300M10 7.500a2.300 2.300 0 1 1 2.300 2.300" /></DockIcon></DockButton>
          <DockButton aria-label="手机"><DockIcon><path d="M4 1h12v18H4zM8 16h4" /></DockIcon></DockButton>
          <DockButton aria-label="菜单"><DockIcon><path d="M2.500 3.500h15M2.500 10h15M2.500 16.500h15" /></DockIcon></DockButton>
        </DockBar>
        <DockTrack><DockThumb /></DockTrack>
      </Dock>

      <Pointers width="1290" height="744" viewBox="0 0 1290 744" fill="#ff2412" aria-hidden="true">
        <path d="M78 396L208 618l4-2 0 13-12-5 3-2z" />
        <path d="M957 293l13 2-2 4 120 111L963 304l-3 4z" />
        <path d="M918 701l177-82-2-3 13 1-8 11 0-5z" />
      </Pointers>
    </Page>
  );
}
